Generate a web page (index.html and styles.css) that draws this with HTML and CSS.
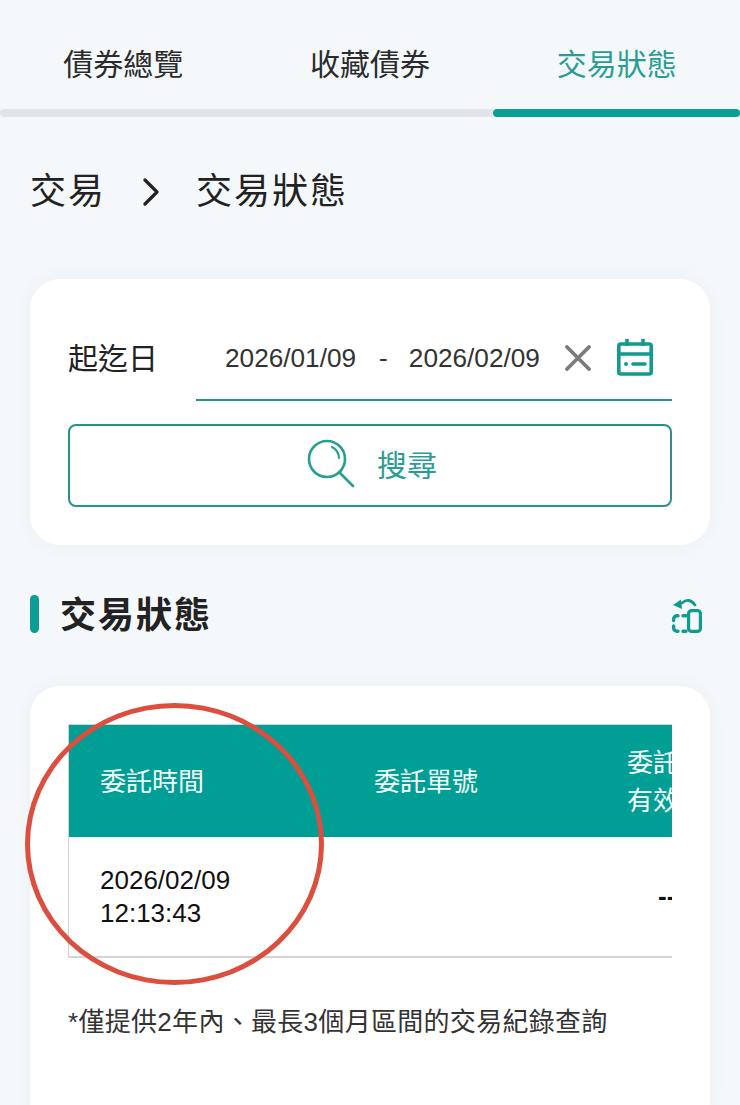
FILE: index.html
```html
<!DOCTYPE html>
<html lang="zh-Hant">
<head>
    <meta charset="UTF-8">
    <meta name="viewport" content="width=device-width, initial-scale=1.0">
    <title>交易狀態</title>
    <link rel="stylesheet" href="styles.css">
</head>
<body>
    <nav class="tabs">
        <a class="tab">債券總覽</a>
        <a class="tab">收藏債券</a>
        <a class="tab active">交易狀態</a>
    </nav>

    <div class="breadcrumb">
        <span>交易</span>
        <svg class="chevron" width="16" height="28" viewBox="0 0 16 28">
            <path d="M2 2 L14 14 L2 26" fill="none" stroke="#222" stroke-width="3.2" stroke-linecap="round" stroke-linejoin="round"/>
        </svg>
        <span>交易狀態</span>
    </div>

    <section class="card search-card">
        <div class="date-row">
            <label class="date-label">起迄日</label>
            <div class="date-field">
                <span class="date-value">2026/01/09</span>
                <span class="date-sep">-</span>
                <span class="date-value">2026/02/09</span>
                <svg class="clear-icon" width="26" height="26" viewBox="0 0 26 26">
                    <path d="M2 2 L24 24 M24 2 L2 24" stroke="#7c7c7c" stroke-width="3.8" stroke-linecap="round"/>
                </svg>
                <svg class="calendar-icon" width="36" height="38" viewBox="0 0 36 38">
                    <rect x="1.8" y="6" width="32.4" height="30" rx="2" fill="none" stroke="#129a90" stroke-width="3.6"/>
                    <path d="M2 16 H34 M10 1 V8 M26 1 V8" stroke="#129a90" stroke-width="3.6" fill="none"/>
                    <circle cx="9" cy="26" r="2" fill="#129a90"/>
                    <path d="M16 26 H28" stroke="#129a90" stroke-width="3.6" stroke-linecap="round"/>
                </svg>
            </div>
        </div>
        <button class="search-btn">
            <svg width="50" height="50" viewBox="0 0 50 50">
                <circle cx="20" cy="20" r="18" fill="none" stroke="#2a9d93" stroke-width="2.6"/>
                <path d="M32 33 L46 47" stroke="#2a9d93" stroke-width="2.6" stroke-linecap="round"/>
                <path d="M25 8 A13 13 0 0 1 32 19" fill="none" stroke="#2a9d93" stroke-width="2.2" stroke-linecap="round"/>
            </svg>
            <span>搜尋</span>
        </button>
    </section>

    <div class="section-head">
        <span class="section-mark"></span>
        <h2 class="section-title">交易狀態</h2>
        <svg class="rotate-icon" width="34" height="38" viewBox="0 0 34 38">
            <rect x="19.6" y="15.6" width="11.8" height="20.8" rx="3" fill="none" stroke="#129a90" stroke-width="3.2"/>
            <path d="M9 20.8 H8 A3.4 3.4 0 0 0 4.6 24.2 V25.5 M4.6 31 V32.8 A3.4 3.4 0 0 0 8 36.2 H9 M14 20.8 H17 M14 36.2 H17" fill="none" stroke="#129a90" stroke-width="3.4" stroke-linecap="round"/>
            <path d="M13 8 Q20 2 26 10" fill="none" stroke="#129a90" stroke-width="2.8" stroke-linecap="round"/>
            <path d="M4 10 L12 4.5 L13 14 Z" fill="#129a90"/>
        </svg>
    </div>

    <section class="card table-card">
        <div class="table-wrap">
            <table class="orders">
                <thead>
                    <tr>
                        <th class="col-time">委託時間</th>
                        <th class="col-no">委託單號</th>
                        <th class="col-valid">委託<br>有效期</th>
                    </tr>
                </thead>
                <tbody>
                    <tr>
                        <td class="col-time">2026/02/09<br>12:13:43</td>
                        <td class="col-no"></td>
                        <td class="col-valid cell-empty">--</td>
                    </tr>
                </tbody>
            </table>
        </div>
        <p class="note">*僅提供2年內、最長3個月區間的交易紀錄查詢</p>
    </section>

    <div class="red-circle"></div>
</body>
</html>
```

FILE: styles.css
```css
html, body {
    height: 1105px;
    overflow: hidden;
}

body {
    font-family: "Liberation Sans", "Noto Sans CJK TC", sans-serif;
    background-color: #f4f8fb;
    color: #222;
    margin: 0;
    padding: 0;
    position: relative;
}

.tabs {
    display: flex;
}

.tab {
    flex: 1;
    text-align: center;
    font-size: 30px;
    line-height: 48px;
    padding-top: 41px;
    color: #2b2b2b;
}

.tab::after {
    content: "";
    display: block;
    height: 8px;
    margin-top: 20px;
    background-color: #e1e4e8;
}

.tab:first-child::after {
    border-radius: 4px 0 0 4px;
}

.tab.active {
    color: #2a9d93;
}

.tab.active::after {
    background-color: #0a9e94;
    border-radius: 4px;
}

.breadcrumb {
    display: flex;
    align-items: center;
    gap: 38px;
    margin: 52px 30px 64px;
    font-size: 36px;
    line-height: 46px;
    letter-spacing: 2px;
}

.chevron {
    margin-left: -1px;
    margin-right: -1px;
    margin-top: -1px;
}

.card {
    background-color: white;
    border-radius: 30px;
    margin: 0 30px;
    padding: 38px;
    box-shadow: 0px 0px 20px rgba(0, 60, 80, 0.04);
}

.date-row {
    display: flex;
    align-items: stretch;
    height: 84px;
    margin-bottom: 23px;
}

.date-label {
    width: 128px;
    font-size: 30px;
    line-height: 84px;
    flex-shrink: 0;
}

.date-field {
    flex: 1;
    display: flex;
    align-items: center;
    padding-left: 29px;
    padding-right: 18px;
    border-bottom: 2px solid #2a9187;
    font-size: 26.2px;
    color: #333;
}

.date-sep {
    margin: 0 21px 0 23px;
}

.clear-icon {
    margin-left: 25px;
}

.calendar-icon {
    margin-left: 26px;
    margin-top: -2px;
}

.search-btn {
    display: flex;
    align-items: center;
    justify-content: center;
    gap: 20px;
    width: 100%;
    height: 83px;
    padding: 0 0 6px 8px;
    background-color: white;
    border: 2px solid #2a9187;
    border-radius: 8px;
    color: #2a9d93;
    font-family: inherit;
    font-size: 30px;
}

.search-btn svg {
    margin-top: 2px;
    margin-left: -4px;
}

.section-head {
    display: flex;
    align-items: center;
    margin: 46px 38px 49px 30px;
    height: 46px;
}

.section-mark {
    width: 9px;
    height: 38px;
    background-color: #0a9e94;
    border-radius: 5px;
    margin-right: 21px;
}

.section-title {
    flex: 1;
    margin: 0;
    padding-top: 3px;
    font-size: 36px;
    line-height: 46px;
    font-weight: bold;
    letter-spacing: 2px;
}

.rotate-icon {
    margin-right: -1px;
}

.table-card {
    padding-bottom: 90px;
}

.table-wrap {
    overflow: hidden;
}

.orders {
    border-collapse: collapse;
    table-layout: fixed;
    width: 800px;
    font-size: 26px;
    border-top: 1px solid #cfd8d8;
    border-left: 1px solid #d4d4d4;
    border-bottom: 2px solid #d4d4d4;
}

.orders th {
    height: 110px;
    padding: 2px 0 0 31px;
    background-color: #009e94;
    color: #f2fbfa;
    font-weight: normal;
    text-align: left;
    line-height: 38px;
}

.orders td {
    height: 119px;
    padding: 0 0 0 31px;
    line-height: 33px;
    vertical-align: middle;
    color: #111;
}

.col-time {
    width: 243px;
}

.col-no {
    width: 222px;
}

.col-valid {
    width: 272px;
}

.orders .cell-empty {
    padding-left: 62px;
    font-weight: bold;
}

.note {
    margin: 46px 0 0;
    font-size: 26px;
    line-height: 36px;
    letter-spacing: 0.3px;
    color: #333;
}

/* hand-drawn marker on top of the screenshot */
.red-circle {
    position: absolute;
    left: 25px;
    top: 703px;
    width: 289px;
    height: 272px;
    border: 5px solid #dc4f3f;
    border-radius: 50%;
}
```
